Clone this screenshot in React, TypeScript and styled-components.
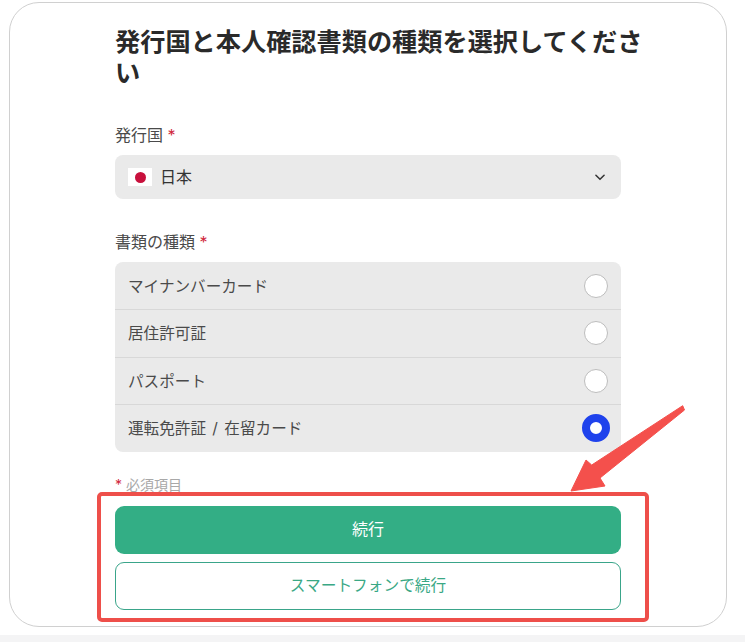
import React from "react";
import styled, { createGlobalStyle } from "styled-components";

const GlobalStyle = createGlobalStyle`
    html, body {
        margin: 0;
        padding: 0;
        background-color: #fff;
    }
    body {
        font-family: Inter, "Noto Sans CJK JP", sans-serif;
    }
`;

const Page = styled.div`
    position: relative;
    width: 745px;
    height: 642px;
    overflow: hidden;
    padding: 2px 18px 0 9px;
    box-sizing: border-box;
`;

const Card = styled.div`
    height: 625px;
    box-sizing: border-box;
    border: 1px solid #d0d0d0;
    border-radius: 30px;
    padding: 24px 105px 0 105px;
`;

const FooterStrip = styled.div`
    position: absolute;
    left: 0;
    right: 0;
    bottom: 0;
    height: 7px;
    background-color: #f4f4f5;
`;

const Title = styled.h1`
    margin: 0 -24px 0 0;
    font-size: 25.2px;
    line-height: 31px;
    font-weight: 600;
    color: #2a2a2a;
`;

const Field = styled.div<{ $top: number }>`
    margin-top: ${(p) => p.$top}px;
`;

const Label = styled.div`
    font-size: 16px;
    line-height: 22px;
    color: #4a4a4a;
    margin-bottom: 9px;
`;

const Star = styled.span`
    color: #d0273c;
`;

const Select = styled.div`
    height: 44px;
    display: flex;
    align-items: center;
    gap: 8px;
    padding: 0 14px 0 13px;
    background-color: #eaeaea;
    border-radius: 8px;
    font-size: 16px;
    color: #333;
`;

const Flag = styled.div`
    width: 24px;
    height: 18px;
    display: flex;
    align-items: center;
    justify-content: center;
    background-color: #fff;

    &::after {
        content: "";
        width: 11px;
        height: 11px;
        border-radius: 50%;
        background-color: #c8103c;
    }
`;

const SelectValue = styled.span`
    flex: 1;
    margin-bottom: 2px;
`;

const Options = styled.div`
    background-color: #eaeaea;
    border-radius: 8px;
    overflow: hidden;
`;

const Option = styled.div`
    height: 47px;
    box-sizing: border-box;
    display: flex;
    align-items: center;
    justify-content: space-between;
    padding: 0 13px;
    font-size: 15.6px;
    color: #4a4a4a;

    & + & {
        border-top: 1px solid #d8d8d8;
        height: 47.5px;
    }
`;

const OptionText = styled.span`
    margin-bottom: 2px;
    word-spacing: 2px;
`;

const Radio = styled.span<{ $checked?: boolean }>`
    box-sizing: border-box;
    border-radius: 50%;
    width: ${(p) => (p.$checked ? 28 : 24)}px;
    height: ${(p) => (p.$checked ? 28 : 24)}px;
    margin-right: ${(p) => (p.$checked ? -2 : 0)}px;
    background-color: #fff;
    border: ${(p) => (p.$checked ? "8px solid #1f42ec" : "1px solid #bdbdbd")};
`;

const Required = styled.div`
    margin-top: 23px;
    font-size: 14px;
    line-height: 20px;
    color: #a8a8a8;
`;

const Actions = styled.div`
    position: relative;
    margin-top: 11px;
    display: flex;
    flex-direction: column;
    gap: 8px;
`;

const Highlight = styled.div`
    position: absolute;
    inset: -14px -28px -12px -18px;
    border: 4px solid #ee4f4a;
    border-radius: 5px;
    pointer-events: none;
`;

const PrimaryButton = styled.button`
    height: 48px;
    padding: 0 0 3px;
    border: none;
    border-radius: 9px;
    background-color: #33ae85;
    color: #fff;
    font: inherit;
    font-size: 16px;
`;

const OutlineButton = styled.button`
    height: 48px;
    padding: 0 0 2px;
    border: 1px solid #3aa58a;
    border-radius: 9px;
    background-color: #fff;
    color: #3aa885;
    font: inherit;
    font-size: 15.7px;
`;

const ArrowOverlay = styled.svg`
    position: absolute;
    left: 0;
    top: 0;
    pointer-events: none;
`;

const App = () => {
    return (
        <>
            <GlobalStyle />
            <Page>
                <Card>
                    <Title>発行国と本人確認書類の種類を選択してください</Title>
                    <Field $top={35}>
                        <Label>発行国 <Star>*</Star></Label>
                        <Select>
                            <Flag />
                            <SelectValue>日本</SelectValue>
                            <svg width="14" height="14" viewBox="0 0 24 24" fill="none" stroke="#333" strokeWidth="2.6" strokeLinecap="round" strokeLinejoin="round">
                                <path d="m5 9 7 7 7-7" />
                            </svg>
                        </Select>
                    </Field>
                    <Field $top={32}>
                        <Label>書類の種類 <Star>*</Star></Label>
                        <Options>
                            <Option><OptionText>マイナンバーカード</OptionText><Radio /></Option>
                            <Option><OptionText>居住許可証</OptionText><Radio /></Option>
                            <Option><OptionText>パスポート</OptionText><Radio /></Option>
                            <Option><OptionText>運転免許証 / 在留カード</OptionText><Radio $checked /></Option>
                        </Options>
                    </Field>
                    <Required><Star>*</Star> 必須項目</Required>
                    <Actions>
                        <PrimaryButton>続行</PrimaryButton>
                        <OutlineButton>スマートフォンで続行</OutlineButton>
                        <Highlight />
                    </Actions>
                </Card>
                <FooterStrip />
                <ArrowOverlay width="745" height="642" viewBox="0 0 745 642">
                    <polygon
                        points="682.7,405.7 591.7,465 586,460 571,491 605,486 600,478 684.5,410"
                        fill="#f4504c"
                        stroke="#f4504c"
                        strokeWidth="1"
                        strokeLinejoin="round"
                    />
                </ArrowOverlay>
            </Page>
        </>
    );
};

export default App;
